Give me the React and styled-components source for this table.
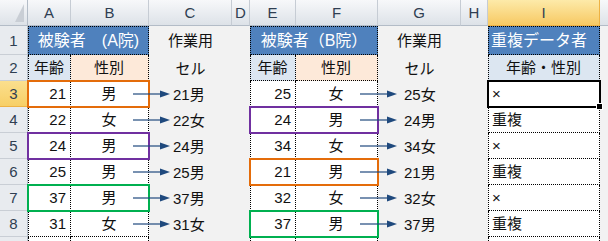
import styled, { createGlobalStyle } from 'styled-components'

const GlobalStyle = createGlobalStyle`
  html, body {
    margin: 0;
    padding: 0;
    background: #f2f2f2;
    overflow: hidden;
  }
  body {
    font-family: "Liberation Sans", "Noto Sans CJK JP", sans-serif;
  }
`

const DOT = '1px dotted #000'

const Sheet = styled.div`
  display: grid;
  grid-template-columns: 28px 43px 78px 83px 18px 46px 82px 83px 27px 112px 64px;
  grid-template-rows: 26px 29px repeat(8, 26px);
  width: 608px;
  height: 241px;
  overflow: hidden;
  background: #f2f2f2;
  font-size: 15px;
  color: #111;
`

const Place = styled.div`
  grid-column: ${p => p.$c};
  grid-row: ${p => p.$r};
  box-sizing: border-box;
  min-width: 0;
  display: flex;
  align-items: center;
  line-height: 1;
  white-space: nowrap;
`

const Corner = styled(Place)`
  background: linear-gradient(#f7f8fa, #dde2e8);
  border-right: 1px solid #b3bcc7;
  border-bottom: 1px solid #b3bcc7;
  justify-content: flex-end;
  align-items: flex-end;
  padding: 0 3px 3px 0;
`

const Triangle = styled.div`
  width: 0;
  height: 0;
  border-left: 9px solid transparent;
  border-bottom: 18px solid #c9ced5;
`

const ColHead = styled(Place)`
  justify-content: center;
  font: 15px "Liberation Sans", sans-serif;
  color: #2f3e52;
  background: ${p => (p.$active ? 'linear-gradient(#fdeaa9, #f7c963)' : 'linear-gradient(#f7f8fa, #dde2e8)')};
  border-right: 1px solid ${p => (p.$active ? '#eeb243' : '#c6ccd4')};
  border-bottom: 1px solid ${p => (p.$active ? '#eeb243' : '#b3bcc7')};
`

const RowHead = styled(Place)`
  justify-content: center;
  font: 15px "Liberation Sans", sans-serif;
  color: #2f3e52;
  background: ${p => (p.$active ? 'linear-gradient(#fbdf8e, #f7cf66)' : '#e8ebef')};
  border-right: 1px solid ${p => (p.$active ? '#eeb243' : '#b3bcc7')};
  border-bottom: 1px solid ${p => (p.$active ? '#eeb243' : '#c9ced5')};
`

const Title = styled(Place)`
  background: #4f81bd;
  color: #fff;
  font-size: 16px;
  border: ${DOT};
  justify-content: ${p => (p.$left ? 'flex-start' : 'center')};
  padding-left: ${p => (p.$left ? '2px' : '0')};
`

const tones = { blue: '#dce6f1', peach: '#fde9d9', white: '#fff' }

const TableCell = styled(Place)`
  background: ${p => tones[p.$tone || 'white']};
  border-right: ${DOT};
  border-bottom: ${DOT};
  border-left: ${p => (p.$first ? DOT : 'none')};
  justify-content: ${p => p.$align || 'center'};
  padding: 0 4px 0 3px;
`

const Note = styled(Place)`
  justify-content: center;
`

const Work = styled(Place)`
  z-index: 3;
  overflow: visible;
  gap: ${p => p.$gap}px;
  margin-left: -${p => p.$lead}px;
`

const Highlight = styled.div`
  grid-column: ${p => p.$c};
  grid-row: ${p => p.$r};
  margin: -1px;
  border: 2px solid ${p => p.$color};
  z-index: 2;
  pointer-events: none;
`

const Selection = styled.div`
  grid-column: ${p => p.$c};
  grid-row: ${p => p.$r};
  margin: -1px;
  border: 2px solid #000;
  z-index: 4;
  position: relative;
`

const FillHandle = styled.span`
  position: absolute;
  right: -4px;
  bottom: -4px;
  width: 5px;
  height: 5px;
  background: #000;
  border: 1px solid #fff;
`

const Arrow = () => (
  <svg width="37" height="10" viewBox="0 0 37 10">
    <line x1="0" y1="5" x2="28" y2="5" stroke="#1f497d" strokeWidth="1.2" />
    <polygon points="27,1.5 37,5 27,8.5" fill="#1f497d" />
  </svg>
)

const highlightColors = { orange: '#e46c0a', purple: '#7030a0', green: '#00b050' }

const groupA = [
  { age: 21, sex: '男', mark: 'orange' },
  { age: 22, sex: '女' },
  { age: 24, sex: '男', mark: 'purple' },
  { age: 25, sex: '男' },
  { age: 37, sex: '男', mark: 'green' },
  { age: 31, sex: '女' },
]

const groupB = [
  { age: 25, sex: '女' },
  { age: 24, sex: '男', mark: 'purple' },
  { age: 34, sex: '女' },
  { age: 21, sex: '男', mark: 'orange' },
  { age: 32, sex: '女' },
  { age: 37, sex: '男', mark: 'green' },
]

const results = ['×', '重複', '×', '重複', '×', '重複']

// the last column and row only peek in at the edge, so they carry no label
const letters = ['A', 'B', 'C', 'D', 'E', 'F', 'G', 'H', 'I', '']
const rowNumbers = [1, 2, 3, 4, 5, 6, 7, 8, '']

const Group = ({ col, title, rows, lead, gap }) => (
  <>
    <Title $c={`${col} / ${col + 2}`} $r={2}>{title}</Title>
    <TableCell $c={col} $r={3} $tone="blue" $first>年齢</TableCell>
    <TableCell $c={col + 1} $r={3} $tone="peach">性別</TableCell>
    <Note $c={col + 2} $r={2}>作業用</Note>
    <Note $c={col + 2} $r={3}>セル</Note>
    {rows.map((it, i) => (
      <Row key={i} col={col} r={i + 4} it={it} lead={lead} gap={gap} />
    ))}
    <TableCell $c={col} $r={10} $first />
    <TableCell $c={col + 1} $r={10} />
  </>
)

const Row = ({ col, r, it, lead, gap }) => (
  <>
    <TableCell $c={col} $r={r} $align="flex-end" $first>{it.age}</TableCell>
    <TableCell $c={col + 1} $r={r}>{it.sex}</TableCell>
    {it.mark ? <Highlight $c={`${col} / ${col + 2}`} $r={r} $color={highlightColors[it.mark]} /> : null}
    <Work $c={col + 2} $r={r} $lead={lead} $gap={gap}>
      <Arrow />
      <span>{it.age}{it.sex}</span>
    </Work>
  </>
)

const App = () => (
  <>
    <GlobalStyle />
    <Sheet>
      <Corner $c={1} $r={1}><Triangle /></Corner>
      {letters.map((l, i) => (
        <ColHead key={i} $c={i + 2} $r={1} $active={l === 'I'}>{l}</ColHead>
      ))}
      {rowNumbers.map((n, i) => (
        <RowHead key={i} $c={1} $r={i + 2} $active={n === 3}>{n}</RowHead>
      ))}

      <Group col={2} title="被験者　(A院)" rows={groupA} lead={16} gap={3} />
      <Group col={6} title="被験者（B院）" rows={groupB} lead={18} gap={7} />

      <Title $c={10} $r={2} $left>重複データ者</Title>
      <TableCell $c={10} $r={3} $tone="blue" $first>年齢・性別</TableCell>
      {results.map((t, i) => (
        <TableCell key={i} $c={10} $r={i + 4} $align="flex-start" $first>{t}</TableCell>
      ))}
      <TableCell $c={10} $r={10} $first />
      <Selection $c={10} $r={4}><FillHandle /></Selection>
    </Sheet>
  </>
)

export default App
